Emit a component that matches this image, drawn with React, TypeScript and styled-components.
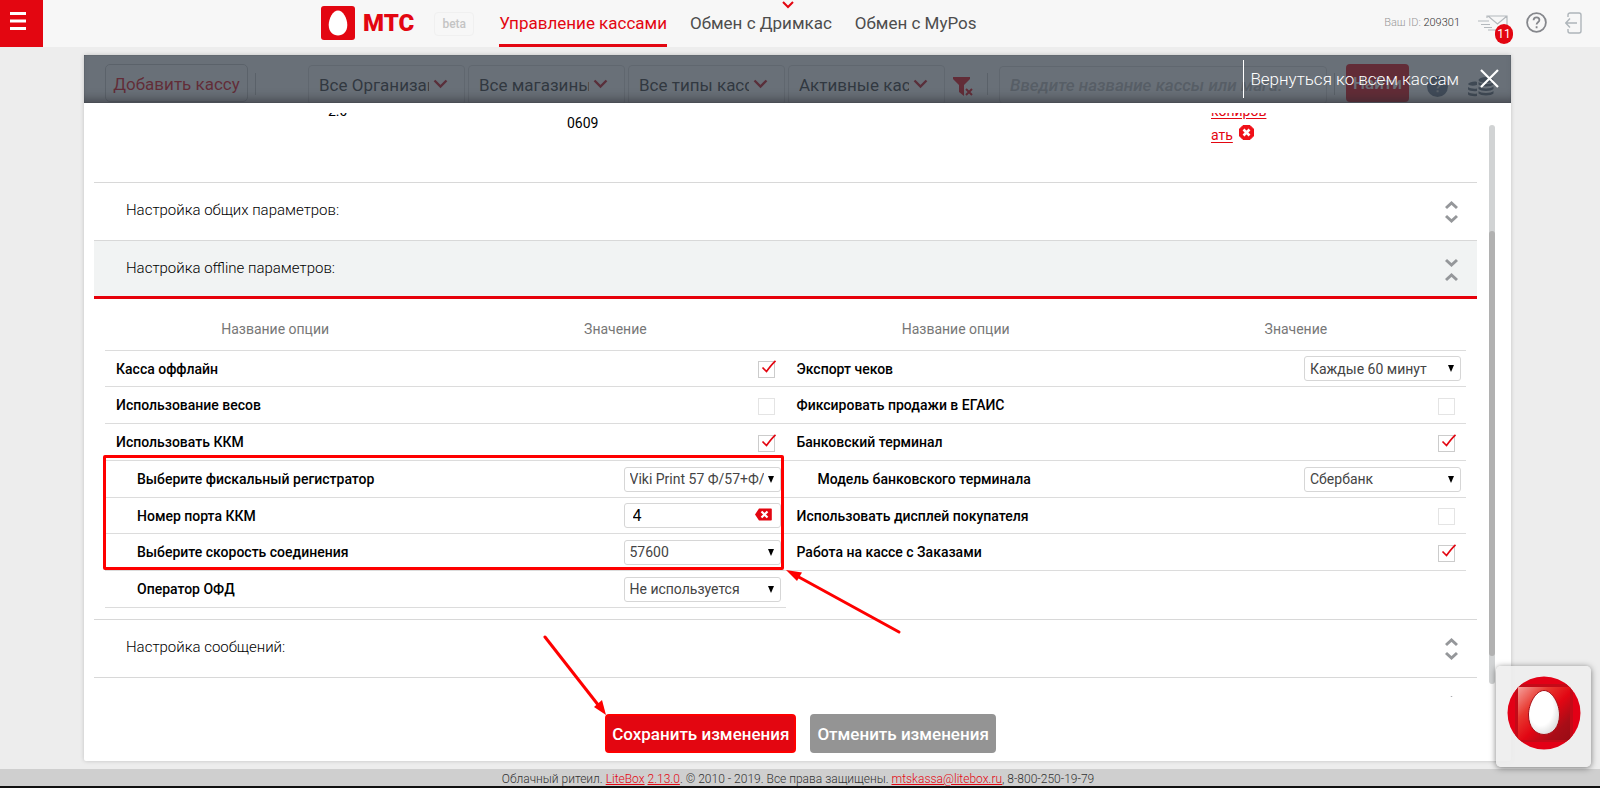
import React from "react";
import styled, { createGlobalStyle, css } from "styled-components";

const RED = "#e30611";

const GlobalStyle = createGlobalStyle`
  *, *::before, *::after { box-sizing: border-box; }
  html, body { margin: 0; padding: 0; }
  body { background: #ededed; font-family: Roboto, "Liberation Sans", sans-serif; color: #000; }
  button, input, select { font: inherit; color: inherit; margin: 0; }
  button { cursor: pointer; }
`;

const Page = styled.div`
  height: 100vh;
  min-height: 600px;
  display: flex;
  flex-direction: column;
  overflow: hidden;
`;

/* ---------- top bar ---------- */

const TopBar = styled.header`
  height: 47px;
  flex: none;
  display: flex;
  background: #f7f7f7;
`;

const MenuButton = styled.button`
  width: 43px;
  border: 0;
  padding: 0 0 4px 10px;
  background: ${RED};
  display: flex;
  align-items: center;
`;

const Logo = styled.a`
  display: flex;
  align-items: center;
  gap: 8px;
  margin: 0 20px 2px 278px;
  text-decoration: none;
  color: ${RED};
  font-size: 24px;
  line-height: 28px;
  font-weight: 900;
`;

const Beta = styled.span`
  align-self: center;
  width: 40px;
  padding: 4px 0;
  text-align: center;
  font-size: 12px;
  line-height: 14px;
  font-weight: 500;
  color: #c4c4c4;
  border: 1px solid #f0f0f0;
  border-radius: 4px;
`;

const Nav = styled.nav`
  display: flex;
  gap: 23px;
  margin-left: 25px;
`;

const NavLink = styled.a<{ $active?: boolean }>`
  position: relative;
  height: 47px;
  padding-top: 11px;
  font-size: 17px;
  line-height: 24px;
  text-decoration: none;
  white-space: nowrap;
  color: ${(p) => (p.$active ? RED : "#4d4d4d")};
  border-bottom: 3px solid ${(p) => (p.$active ? RED : "transparent")};
`;

const NavMark = styled.svg`
  position: absolute;
  top: 1px;
  right: 38px;
`;

const Account = styled.div`
  margin-left: auto;
  padding-right: 18px;
  display: flex;
  align-items: center;
`;

const AccountId = styled.span`
  font-size: 11px;
  line-height: 14px;
  font-weight: 300;
  color: #999;
  margin: 0 18px 2px 0;
  b { font-weight: 300; color: #333; }
`;

const IconButton = styled.button`
  position: relative;
  display: flex;
  padding: 0;
  margin: 0 0 2px 0;
  border: 0;
  background: none;
`;

const AccountIcons = styled.div`
  display: flex;
  align-items: center;
  gap: 18px;
`;

const Counter = styled.span`
  position: absolute;
  left: 17px;
  top: 9px;
  width: 18px;
  border-radius: 9px;
  background: ${RED};
  color: #fff;
  font-size: 12px;
  line-height: 20px;
  text-align: center;
`;

/* ---------- dialog ---------- */

const Dialog = styled.main`
  flex: 1;
  min-height: 0;
  margin: 8px 89px 8px 84px;
  display: flex;
  flex-direction: column;
  background: #fff;
  border-radius: 2px;
  box-shadow: 0 0 4px rgba(0, 0, 0, 0.18);
`;

const DialogTop = styled.div`
  position: relative;
  flex: none;
  height: 48px;
  overflow: hidden;
`;

const Toolbar = styled.div`
  display: flex;
  align-items: flex-start;
  padding: 9px 17px 0 21px;
  font-size: 17px;
  line-height: 24px;
`;

const AddButton = styled.button`
  height: 38px;
  width: 143px;
  flex: none;
  padding: 2px 0 0;
  background: none;
  border: 1px solid #ccc;
  border-radius: 5px;
  color: ${RED};
`;

const Divider = styled.span<{ $after: number }>`
  width: 1px;
  height: 22px;
  flex: none;
  margin: 9px ${(p) => p.$after}px 0 7px;
  background: #c9c9c9;
`;

const FilterBox = styled.label`
  position: relative;
  width: 157px;
  height: 40px;
  flex: none;
  margin: 1px 3px 0 0;
  border: 1px solid #ddd;
  border-radius: 4px;
  svg { position: absolute; right: 16px; top: 13px; pointer-events: none; }
`;

const FilterSelect = styled.select`
  appearance: none;
  display: block;
  width: 120px;
  height: 37px;
  padding: 0 0 0 10px;
  border: 0;
  background: none;
  color: #333;
  outline: none;
`;

const ClearFilter = styled.button`
  padding: 0;
  margin: 13px 7px 0 5px;
  border: 0;
  background: none;
  display: flex;
`;

const Search = styled.input`
  flex: 1;
  min-width: 0;
  height: 38px;
  margin-top: 2px;
  padding: 0 10px;
  border: 1px solid #ddd;
  border-radius: 4px;
  background: none;
  font-style: italic;
  font-weight: 500;
  &::placeholder { color: #bbb; opacity: 1; }
`;

const FindButton = styled.button`
  width: 63px;
  height: 38px;
  flex: none;
  padding: 0;
  border: 0;
  border-radius: 4px;
  background: ${RED};
  color: #fff;
  font-weight: 500;
`;

const ToolbarIcons = styled.div`
  display: flex;
  gap: 20px;
  padding-top: 12px;
  margin-left: 18px;
`;

const Shade = styled.div`
  position: absolute;
  inset: 0;
  display: flex;
  align-items: center;
  justify-content: flex-end;
  padding: 0 12px 0 0;
  background: rgba(49, 59, 70, 0.73);
  box-shadow: inset 0 0 1px rgba(0, 0, 0, 0.5), inset 0 -10px 10px -6px rgba(40, 40, 45, 0.5);
`;

const BackLink = styled.a`
  display: flex;
  align-items: center;
  height: 38px;
  padding: 0 0 0 6px;
  margin-right: 21px;
  border-left: 1px solid #fff;
  color: #fff;
  text-decoration: none;
  font-size: 17px;
  line-height: 24px;
  font-weight: 300;
`;

const Body = styled.div`
  position: relative;
  flex: 1;
  min-height: 0;
  margin-top: 10px;
  overflow: hidden;
  padding: 0 34px 0 10px;
`;

const Track = styled.div`
  position: absolute;
  top: 12px;
  bottom: 13px;
  right: 16px;
  width: 6px;
  border-radius: 3px;
  background: #d1d3d4;
`;

const Thumb = styled.div`
  margin-top: 106px;
  height: 76%;
  border-radius: 3px;
  background: #b1b1b1;
`;

/* The list is shown scrolled, so the till row starts above the visible area. */
const TillRow = styled.div`
  display: grid;
  grid-template-columns: 470px 1fr 266px;
  align-items: center;
  height: 142px;
  margin-top: -73px;
  font-size: 14px;
  line-height: 24px;
`;

const TillVersion = styled.span`
  padding-left: 234px;
`;

const TillNumber = styled.span`
  padding: 24px 0 0 3px;
`;

const TillCopy = styled.span`
  padding-top: 24px;
  a { color: ${RED}; text-decoration: underline; text-underline-offset: 2px; }
  svg { vertical-align: 0; margin-left: 6px; }
`;

const SectionHead = styled.button<{ $open?: boolean }>`
  display: flex;
  align-items: center;
  justify-content: space-between;
  width: 100%;
  height: 58px;
  padding: 0 19px 3px 32px;
  border: 0;
  border-top: 1px solid #d8d8d8;
  background: none;
  font-size: 15px;
  line-height: 20px;
  font-weight: 300;
  text-align: left;
  svg { position: relative; top: 2px; }
  ${(p) =>
    p.$open &&
    css`
      height: 59px;
      padding-bottom: 2px;
      background: #f1f3f3;
      border-bottom: 3px solid #e6000a;
    `}
`;

const Tables = styled.div`
  display: grid;
  grid-template-columns: 1fr 1fr;
  align-items: start;
  padding: 0 11px 11px;
`;

const TableWrap = styled.div`
  position: relative;
`;

const OptionTable = styled.table`
  width: 100%;
  border-collapse: separate;
  border-spacing: 0;
  table-layout: fixed;
  th, td { padding: 0; border-bottom: 1px solid #dcdcdc; }
`;

const ColumnHead = styled.th`
  && { padding-top: 8px; }
  height: 52px;
  font-size: 14px;
  line-height: 20px;
  font-weight: 400;
  color: #777;
`;

const OptionRow = styled.tr`
  height: 37px;
  &:nth-child(4n + 1) { height: 36px; }
`;

const OptionName = styled.td<{ $nested?: boolean }>`
  && { padding-left: ${(p) => (p.$nested ? 32 : 11)}px; }
  font-size: 14px;
  line-height: 20px;
  font-weight: 500;
`;

const OptionValue = styled.td<{ $check?: boolean }>`
  && { padding-right: ${(p) => (p.$check ? 11 : 5)}px; }
`;

const Field = styled.div`
  position: relative;
  width: 157px;
  margin-left: auto;
  svg { position: absolute; right: 7px; top: 9px; pointer-events: none; }
`;

const fieldBox = css`
  display: block;
  width: 100%;
  height: 25px;
  border: 1px solid #d6d6d6;
  border-radius: 3px;
  background: #fff;
  outline: none;
`;

const Select = styled.select`
  ${fieldBox}
  appearance: none;
  padding: 0 16px 0 5px;
  font-size: 14px;
  line-height: 20px;
  color: #444;
`;

const NumberInput = styled.input`
  ${fieldBox}
  padding: 0 32px 0 8px;
  font-size: 16px;
  line-height: 20px;
`;

const ClearInput = styled.button`
  position: absolute;
  right: 9px;
  top: 5px;
  width: 17px;
  height: 13px;
  padding: 0;
  border: 0;
  background: none;
  && svg { position: static; display: block; }
`;

const Check = styled.span`
  position: relative;
  display: block;
  width: 17px;
  height: 17px;
  margin: 2px 0 0 auto;
  svg { position: absolute; left: 3px; top: -1px; pointer-events: none; }
`;

const CheckInput = styled.input`
  appearance: none;
  display: block;
  width: 17px;
  height: 17px;
  border: 1px solid #e4e4e4;
  background: #fff;
  &:checked { border-color: #ccc; }
`;

const Highlight = styled.div`
  position: absolute;
  top: 156px;
  left: -2px;
  right: 2px;
  height: 115px;
  border: 3px solid #fe0000;
  border-radius: 2px;
  pointer-events: none;
`;

const TableArrow = styled.svg`
  position: absolute;
  z-index: 1;
  left: 100%;
  top: 271px;
  pointer-events: none;
`;

const Actions = styled.div`
  flex: none;
  display: flex;
  justify-content: center;
  gap: 14px;
  padding: 17px 0 8px 6px;
`;

const ActionButton = styled.button<{ $primary?: boolean }>`
  position: relative;
  height: 39px;
  padding: 0 5px;
  border: 2px solid ${(p) => (p.$primary ? "#fe0000" : "#949494")};
  border-radius: 4px;
  background: ${(p) => (p.$primary ? RED : "#949494")};
  color: #fff;
  font-size: 17px;
  line-height: 24px;
  font-weight: 500;
  svg { position: absolute; right: 100%; bottom: 100%; pointer-events: none; }
`;

const Footer = styled.footer`
  flex: none;
  height: 19px;
  padding: 1px 4px 0 0;
  background: #cfcfcf;
  border-bottom: 2px solid #111;
  text-align: center;
  font-size: 12px;
  line-height: 19px;
  font-weight: 300;
  color: #333;
  a { color: ${RED}; }
`;

const Assistant = styled.button`
  position: fixed;
  right: 9px;
  bottom: 21px;
  width: 95px;
  height: 101px;
  padding: 0 0 7px;
  display: flex;
  align-items: center;
  justify-content: center;
  border: 0;
  border-radius: 5px;
  background: rgba(237, 237, 237, 0.9);
  box-shadow: 0 1px 6px rgba(0, 0, 0, 0.5);
`;

/* ---------- drawings ---------- */

const Chevron = () => (
  <svg width="15" height="10" viewBox="0 0 15 10" aria-hidden="true">
    <path d="M1.500 1.500l6 6 6-6" fill="none" stroke="#c4101c" strokeWidth="2.4" />
  </svg>
);

const Caret = () => (
  <svg width="6" height="7" viewBox="0 0 6 7" aria-hidden="true">
    <path d="M0 0h6L3 7z" fill="#000" />
  </svg>
);

const Toggle = ({ open }: { open?: boolean }) => (
  <svg width="13" height="24" viewBox="0 0 13 24" fill="none" stroke="#95979a" strokeWidth="3" aria-hidden="true">
    {open ? <path d="M1 2l5.5 5L12 2M1 22l5.5-5 5.5 5" /> : <path d="M1 8l5.5-5L12 8M1 16l5.5 5 5.5-5" />}
  </svg>
);

const Tick = () => (
  <svg width="16" height="14" viewBox="0 0 16 14" aria-hidden="true">
    <path d="M1.500 7.500L5.500 11.500C8 8 11 4 14.500 .8" fill="none" stroke={RED} strokeWidth="1.700" />
  </svg>
);

/* ---------- parts ---------- */

const FilterDrop = ({ name, value }: { name: string; value: string }) => (
  <FilterBox>
    <FilterSelect aria-label={name}>
      <option>{value}</option>
    </FilterSelect>
    <Chevron />
  </FilterBox>
);

type Option = {
  id: string;
  name: string;
  nested?: boolean;
  checked?: boolean;
  choice?: string;
  input?: string;
};

const leftOptions: Option[] = [
  { id: "offline", name: "Касса оффлайн", checked: true },
  { id: "scales", name: "Использование весов", checked: false },
  { id: "kkm", name: "Использовать ККМ", checked: true },
  { id: "fiscal", name: "Выберите фискальный регистратор", nested: true, choice: "Viki Print 57 Ф/57+Ф/" },
  { id: "port", name: "Номер порта ККМ", nested: true, input: "4" },
  { id: "speed", name: "Выберите скорость соединения", nested: true, choice: "57600" },
  { id: "ofd", name: "Оператор ОФД", nested: true, choice: "Не используется" },
];

const rightOptions: Option[] = [
  { id: "export", name: "Экспорт чеков", choice: "Каждые 60 минут" },
  { id: "egais", name: "Фиксировать продажи в ЕГАИС", checked: false },
  { id: "bank", name: "Банковский терминал", checked: true },
  { id: "bankModel", name: "Модель банковского терминала", nested: true, choice: "Сбербанк" },
  { id: "display", name: "Использовать дисплей покупателя", checked: false },
  { id: "orders", name: "Работа на кассе с Заказами", checked: true },
];

const CheckBox = ({ id, initial }: { id: string; initial: boolean }) => {
  const [on, setOn] = React.useState(initial);
  return (
    <Check>
      <CheckInput id={id} type="checkbox" checked={on} onChange={() => setOn(!on)} />
      {on && <Tick />}
    </Check>
  );
};

const Control = ({ option }: { option: Option }) => {
  const { id, checked, choice, input } = option;
  if (choice !== undefined)
    return (
      <Field>
        <Select id={id}>
          <option>{choice}</option>
        </Select>
        <Caret />
      </Field>
    );
  if (input !== undefined)
    return (
      <Field>
        <NumberInput id={id} type="text" defaultValue={input} />
        <ClearInput type="button" aria-label="Очистить">
          <svg width="17" height="13" viewBox="0 0 17 13">
            <path d="M4 .5h12a.8.8 0 0 1 .8.8v10.400a.8.8 0 0 1-.8.8H4L0 6.500z" fill={RED} />
            <path d="M6.500 3.500l6 6M12.500 3.500l-6 6" stroke="#fff" strokeWidth="2.2" />
          </svg>
        </ClearInput>
      </Field>
    );
  return <CheckBox id={id} initial={!!checked} />;
};

const Options = ({ items }: { items: Option[] }) => (
  <OptionTable>
    <thead>
      <tr>
        <ColumnHead>Название опции</ColumnHead>
        <ColumnHead>Значение</ColumnHead>
      </tr>
    </thead>
    <tbody>
      {items.map((o) => (
        <OptionRow key={o.id}>
          <OptionName $nested={o.nested}>
            <label htmlFor={o.id}>{o.name}</label>
          </OptionName>
          <OptionValue $check={o.checked !== undefined}>
            <Control option={o} />
          </OptionValue>
        </OptionRow>
      ))}
    </tbody>
  </OptionTable>
);

export default function App() {
  return (
    <Page>
      <GlobalStyle />
      <TopBar>
        <MenuButton aria-label="Меню">
          <svg width="16" height="19" viewBox="0 0 16 19">
            <path d="M0 1.500h16M0 9h16M0 16.500h16" stroke="#fff" strokeWidth="3" />
          </svg>
        </MenuButton>
        <Logo href="#">
          <svg width="34" height="34" viewBox="0 0 34 34" aria-hidden="true">
            <rect width="34" height="34" rx="3" fill={RED} />
            <path d="M17 4.500c-5 0-9.300 8-9.300 14.500 0 6.500 4.300 10.500 9.300 10.500s9.300-4 9.300-10.500C26.300 12.500 22 4.500 17 4.500z" fill="#fff" />
          </svg>
          МТС
        </Logo>
        <Beta>beta</Beta>
        <Nav>
          <NavLink href="#" $active>Управление кассами</NavLink>
          <NavLink href="#">
            Обмен с Дримкас
            <NavMark width="12" height="8" viewBox="0 0 12 8">
              <path d="M1 1l5 5 5-5" fill="none" stroke={RED} strokeWidth="2" />
            </NavMark>
          </NavLink>
          <NavLink href="#">Обмен с MyPos</NavLink>
        </Nav>
        <Account>
          <AccountId>Ваш ID: <b>209301</b></AccountId>
          <AccountIcons>
            <IconButton aria-label="Сообщения">
              <svg width="30" height="16" viewBox="0 0 30 16" fill="none" stroke="#b4b9bd" strokeWidth="1.2">
                <path d="M9 3V1h20v14H10M10 1l9.500 8L29 1M0 6h11M3 9.500h9M6 12.500h8" />
              </svg>
              <Counter>11</Counter>
            </IconButton>
            <IconButton aria-label="Помощь">
              <svg width="21" height="21" viewBox="0 0 21 21" fill="none" stroke="#85878c" strokeWidth="1.8">
                <circle cx="10.500" cy="10.500" r="9.400" />
                <path d="M7.600 8.300c0-1.900 1.300-2.900 2.900-2.900s2.900 1 2.900 2.700c0 2.100-2.800 2.200-2.800 4.400M10.600 14.200v2" />
              </svg>
            </IconButton>
            <IconButton aria-label="Выход">
              <svg width="17" height="22" viewBox="0 0 17 22" fill="none" stroke="#aeb5ba" strokeWidth="1.400">
                <path d="M3 5V3a2 2 0 0 1 2-2h9a2 2 0 0 1 2 2v16a2 2 0 0 1-2 2H5a2 2 0 0 1-2-2v-2M12 11H1M5 6.500L.8 11 5 15.500" />
              </svg>
            </IconButton>
          </AccountIcons>
        </Account>
      </TopBar>

      <Dialog>
        <DialogTop>
          <Toolbar>
            <AddButton type="button">Добавить кассу</AddButton>
            <Divider $after={52} />
            <FilterDrop name="Организация" value="Все Организации" />
            <FilterDrop name="Магазин" value="Все магазины" />
            <FilterDrop name="Тип кассы" value="Все типы касс" />
            <FilterDrop name="Статус" value="Активные кассы" />
            <ClearFilter type="button" aria-label="Сбросить фильтр">
              <svg width="20" height="20" viewBox="0 0 20 20">
                <path d="M0 0h17v2l-6 6v11l-5-4V8L0 2z" fill={RED} />
                <path d="M13 12l6 6M19 12l-6 6" stroke={RED} strokeWidth="2" />
              </svg>
            </ClearFilter>
            <Divider $after={11} />
            <Search aria-label="Поиск" placeholder="Введите название кассы или мага:" />
            <Divider $after={11} />
            <FindButton type="button">Найти</FindButton>
            <ToolbarIcons>
              <svg width="21" height="21" viewBox="0 0 21 21">
                <circle cx="10.500" cy="10.500" r="10.500" fill="#68788c" />
                <path d="M7.600 8.300c0-1.900 1.300-2.900 2.900-2.900s2.900 1 2.900 2.700c0 2.100-2.800 2.200-2.800 4.400M10.600 14.200v2" fill="none" stroke="#ccc" strokeWidth="2" />
              </svg>
              <svg width="26" height="22" viewBox="0 0 26 22" fill="#66707c">
                <ellipse cx="18" cy="4" rx="7.500" ry="3" />
                <path d="M10.500 6c2 2.500 13 2.500 15 0v2.500c-2 2.500-13 2.500-15 0zM10.500 10.500c2 2.500 13 2.500 15 0V13c-2 2.500-13 2.500-15 0zM10.500 15c2 2.500 13 2.500 15 0v2.500c-2 2.500-13 2.500-15 0zM0 8c1-2 7-3 9-2v3c-3 1-8 1-9-1zM0 11c2 1.500 6 2 9 1.500V15c-3 .5-8 0-9-1.500zM0 16c2 1.500 6 2 9 1.500V20c-3 .5-8 0-9-1.500z" />
              </svg>
            </ToolbarIcons>
          </Toolbar>
          <Shade>
            <BackLink href="#">Вернуться ко всем кассам</BackLink>
            <IconButton aria-label="Закрыть">
              <svg width="19" height="19" viewBox="0 0 19 19">
                <path d="M1 1l17 17M18 1L1 18" stroke="#fff" strokeWidth="2.200" />
              </svg>
            </IconButton>
          </Shade>
        </DialogTop>

        <Body>
          <TillRow>
            <TillVersion>2.0</TillVersion>
            <TillNumber>0609</TillNumber>
            <TillCopy>
              <a href="#">копиров<br />ать</a>
              <svg width="15" height="15" viewBox="0 0 15 15" role="img" aria-label="Удалить">
                <path d="M4 .5h7L14.500 4v7L11 14.500H4L.5 11V4z" fill="#f01018" stroke="#f01018" strokeLinejoin="round" />
                <path d="M4.500 4.500l6 6M10.500 4.500l-6 6" stroke="#fff" strokeWidth="2.600" />
              </svg>
            </TillCopy>
          </TillRow>

          <SectionHead type="button">Настройка общих параметров:<Toggle /></SectionHead>
          <SectionHead type="button" $open>Настройка offline параметров:<Toggle open /></SectionHead>
          <Tables>
            <TableWrap>
              <Options items={leftOptions} />
              <Highlight />
              <TableArrow width="116" height="66" viewBox="0 0 116 66">
                <path d="M10 5.500L113 62" stroke="#fe0000" strokeWidth="3" strokeLinecap="round" />
                <path d="M0 0l16 2.500-5 8.500z" fill="#fe0000" />
              </TableArrow>
            </TableWrap>
            <Options items={rightOptions} />
          </Tables>
          <SectionHead type="button">Настройка сообщений:<Toggle /></SectionHead>
          <SectionHead type="button" aria-label="Следующий раздел"><span /><Toggle /></SectionHead>
          <Track><Thumb /></Track>
        </Body>

        <Actions>
          <ActionButton type="button" $primary>
            Сохранить изменения
            <svg width="64" height="81" viewBox="0 0 64 81">
              <path d="M2 2l54 69" stroke="#fe0000" strokeWidth="3" strokeLinecap="round" />
              <path d="M63 80l-12-8 8-7z" fill="#fe0000" />
            </svg>
          </ActionButton>
          <ActionButton type="button">Отменить изменения</ActionButton>
        </Actions>
      </Dialog>

      <Footer>
        Облачный ритеил. <a href="#">LiteBox</a> <a href="#">2.13.0</a>. © 2010 - 2019. Все права защищены.{" "}
        <a href="#">mtskassa@litebox.ru</a>, 8-800-250-19-79
      </Footer>

      <Assistant aria-label="Помощник">
        <svg width="74" height="74" viewBox="0 0 74 74">
          <defs>
            <linearGradient id="cube" x1="0" y1="0" x2="1" y2="1">
              <stop offset="0" stopColor="#f5a09b" />
              <stop offset=".3" stopColor="#e8382f" />
              <stop offset=".55" stopColor="#e20613" />
              <stop offset=".8" stopColor="#a80d17" />
              <stop offset="1" stopColor="#9a0c15" />
            </linearGradient>
            <radialGradient id="egg" cx=".4" cy=".4" r=".65">
              <stop offset=".6" stopColor="#fff" />
              <stop offset="1" stopColor="#ddd" />
            </radialGradient>
            <clipPath id="disc"><circle cx="37" cy="37" r="36.500" /></clipPath>
          </defs>
          <circle cx="37" cy="37" r="36.500" fill="#e30016" />
          <g clipPath="url(#disc)">
            <rect x="8" y="8" width="58" height="58" fill="#c40a18" />
            <rect x="11" y="11" width="52" height="53" fill="url(#cube)" />
          </g>
          <path d="M37 14.500c-8 0-15.500 13-15.500 24.500 0 12 7 19.500 15.500 19.500S52.500 51 52.500 39C52.500 27.500 45 14.500 37 14.500z" fill="url(#egg)" stroke="#a50d16" />
        </svg>
      </Assistant>
    </Page>
  );
}
